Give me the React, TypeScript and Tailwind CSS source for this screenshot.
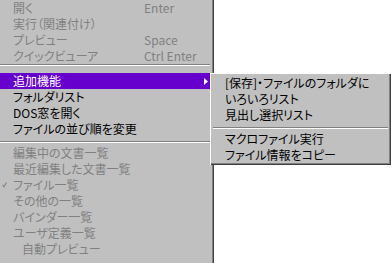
import React from 'react'

type Item =
  | { kind: 'item'; label: string; shortcut?: string; disabled?: boolean; checked?: boolean; indent?: boolean; active?: boolean; sub?: boolean }
  | { kind: 'sep'; top: number; height: number }

const mainItems: Item[] = [
  { kind: 'item', label: '開く', shortcut: 'Enter', disabled: true },
  { kind: 'item', label: '実行（関連付け）', disabled: true },
  { kind: 'item', label: 'プレビュー', shortcut: 'Space', disabled: true },
  { kind: 'item', label: 'クイックビューア', shortcut: 'Ctrl Enter', disabled: true },
  { kind: 'sep', top: 0, height: 9 },
  { kind: 'item', label: '追加機能', active: true, sub: true },
  { kind: 'item', label: 'フォルダリスト' },
  { kind: 'item', label: 'DOS窓を開く' },
  { kind: 'item', label: 'ファイルの並び順を変更' },
  { kind: 'sep', top: 4, height: 8 },
  { kind: 'item', label: '編集中の文書一覧', disabled: true },
  { kind: 'item', label: '最近編集した文書一覧', disabled: true },
  { kind: 'item', label: 'ファイル一覧', disabled: true, checked: true },
  { kind: 'item', label: 'その他の一覧', disabled: true },
  { kind: 'item', label: 'バインダー一覧', disabled: true },
  { kind: 'item', label: 'ユーザ定義一覧', disabled: true },
  { kind: 'item', label: '自動プレビュー', disabled: true, indent: true },
]

const subItems: Item[] = [
  { kind: 'item', label: '[保存]・ファイルのフォルダに' },
  { kind: 'item', label: 'いろいろリスト' },
  { kind: 'item', label: '見出し選択リスト' },
  { kind: 'sep', top: 4, height: 8 },
  { kind: 'item', label: 'マクロファイル実行' },
  { kind: 'item', label: 'ファイル情報をコピー' },
]

function Separator({ top, height, inset }: { top: number; height: number; inset?: boolean }) {
  return (
    <div style={{ height, paddingTop: top }} className={inset ? 'px-[1px]' : ''}>
      <div className="h-px bg-[#808080]" />
      <div className="h-px bg-white" />
    </div>
  )
}

function MenuRow({ item }: { item: Extract<Item, { kind: 'item' }> }) {
  const color = item.active ? 'text-white bg-[#6600cc]' : item.disabled ? 'text-[#808080]' : 'text-black'
  return (
    <div className={`relative flex h-4 items-center ${color}`}>
      {item.checked && (
        <svg className="absolute left-[2px] top-[5px]" width="5" height="6" viewBox="0 0 5 6">
          <polyline points="0.5,3 2,4.8 4.5,0.5" fill="none" stroke="#808080" strokeWidth="1.1" />
        </svg>
      )}
      <span className={`${item.indent ? 'pl-[22px]' : 'pl-[13px]'} w-[144px] shrink-0 whitespace-nowrap`}>{item.label}</span>
      {item.shortcut && <span className="whitespace-nowrap">{item.shortcut}</span>}
      {item.sub && (
        <svg className="absolute left-[204px] top-[5px]" width="4" height="7" viewBox="0 0 4 7">
          <polygon points="0,0 4,3.5 0,7" fill="#ffffff" />
        </svg>
      )}
    </div>
  )
}

export default function App() {
  return (
    <div
      className="relative h-[263px] w-[392px] overflow-hidden bg-white text-[12px] leading-none"
      style={{ fontFamily: '"Noto Sans CJK JP", "Noto Sans", sans-serif', fontFeatureSettings: '"palt"' }}
    >
      <div className="h-[263px] w-[214px] bg-[#c0c0c0] pr-[4px] shadow-[inset_-1px_0_0_#404040,inset_-2px_0_0_#808080]">
        {mainItems.map((it, i) =>
          it.kind === 'sep' ? <Separator key={i} top={it.top} height={it.height} /> : <MenuRow key={i} item={it} />
        )}
      </div>

      <div className="absolute left-[210px] top-[73px] w-[181px] bg-[#c0c0c0] p-[2px] shadow-[inset_1px_1px_0_#ffffff,inset_-1px_-1px_0_#404040,inset_-2px_-2px_0_#808080]">
        {subItems.map((it, i) =>
          it.kind === 'sep' ? (
            <Separator key={i} top={it.top} height={it.height} inset />
          ) : (
            <div key={i} className="flex h-4 items-center whitespace-nowrap pl-[13px] text-black">
              {it.label}
            </div>
          )
        )}
      </div>
    </div>
  )
}
